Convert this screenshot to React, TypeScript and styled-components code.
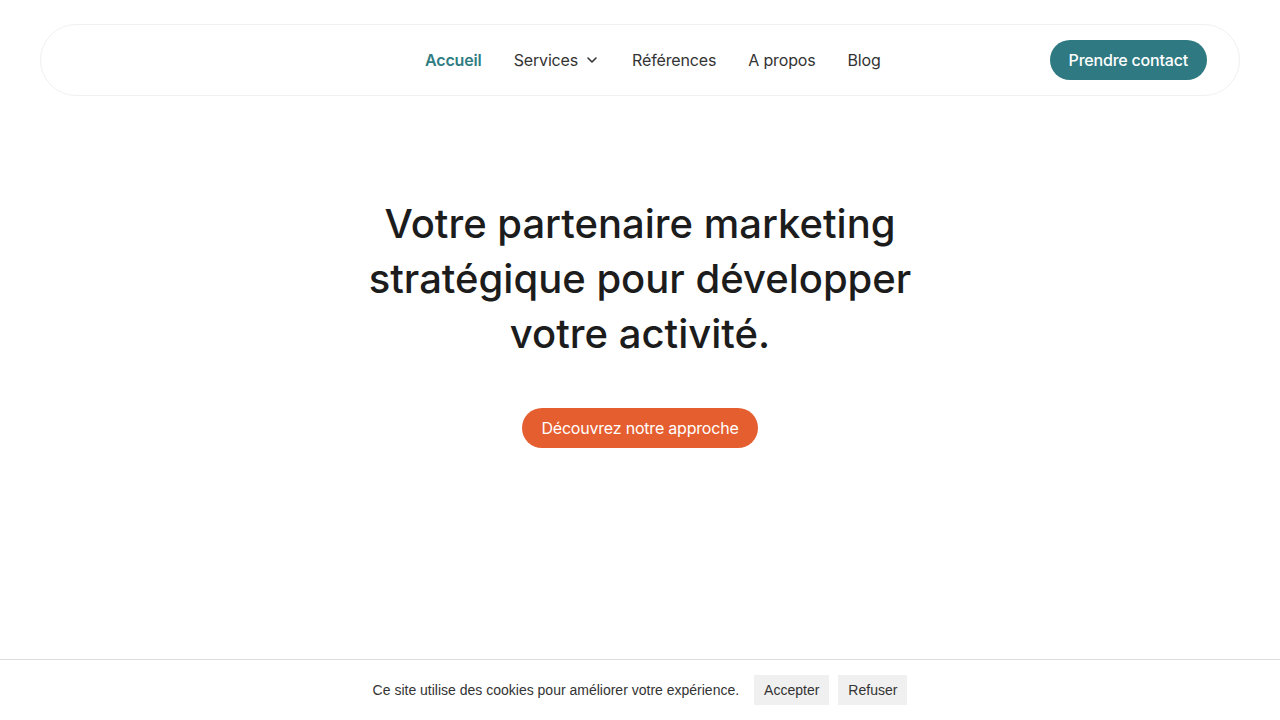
import React from 'react'
import styled, { createGlobalStyle } from 'styled-components'

const GlobalStyle = createGlobalStyle`
  html, body {
    margin: 0;
    padding: 0;
    background: #ffffff;
  }
  body {
    font-family: Inter, 'Noto Sans', sans-serif;
    color: #1c1c1c;
  }
`

const Page = styled.div`
  min-height: 720px;
  display: flex;
  flex-direction: column;
`

const HeaderWrap = styled.header`
  padding: 24px 40px 0;
`

const Navbar = styled.nav`
  height: 70px;
  border: 1px solid #f0f0f0;
  border-radius: 36px;
  display: flex;
  align-items: center;
  padding: 0 32px;
`

const LogoSlot = styled.div`
  width: 352px;
  height: 40px;
`

const NavLinks = styled.ul`
  display: flex;
  align-items: center;
  gap: 32px;
  list-style: none;
  margin: 0;
  padding: 0;
  flex: 1;
`

const NavLink = styled.a<{ $active?: boolean }>`
  display: flex;
  align-items: center;
  gap: 6px;
  font-size: 16px;
  letter-spacing: -0.15px;
  font-weight: ${(p) => (p.$active ? 600 : 400)};
  color: ${(p) => (p.$active ? '#2f7d83' : '#333333')};
  text-decoration: none;
  cursor: pointer;
`

const ContactButton = styled.button`
  height: 40px;
  padding: 0 19px;
  border: none;
  border-radius: 20px;
  background: #2f7a82;
  color: #ffffff;
  font-family: Inter, 'Noto Sans', sans-serif;
  font-size: 16px;
  font-weight: 500;
  letter-spacing: -0.2px;
  cursor: pointer;
`

const Hero = styled.section`
  display: flex;
  flex-direction: column;
  align-items: center;
  padding-top: 100px;
`

const Title = styled.h1`
  margin: 0;
  max-width: 600px;
  text-align: center;
  font-size: 40px;
  line-height: 55px;
  font-weight: 500;
  letter-spacing: 0;
  color: #1c1c1c;
`

const CtaButton = styled.button`
  margin-top: 47px;
  height: 40px;
  padding: 0 19px;
  border: none;
  border-radius: 20px;
  background: #e55e30;
  color: #ffffff;
  font-family: Inter, 'Noto Sans', sans-serif;
  font-size: 16px;
  font-weight: 400;
  letter-spacing: -0.2px;
  cursor: pointer;
`

const CookieBar = styled.div`
  position: fixed;
  left: 0;
  right: 0;
  bottom: 0;
  height: 60px;
  background: #ffffff;
  border-top: 1px solid #dddddd;
  display: flex;
  align-items: center;
  justify-content: center;
  gap: 9px;
  font-family: 'Liberation Sans', Arial, sans-serif;
  font-size: 14px;
  color: #333333;
`

const CookieText = styled.span`
  margin-right: 6px;
`

const CookieButton = styled.button`
  height: 30px;
  padding: 0 10px;
  border: none;
  background: #f0f0f0;
  color: #333333;
  font-family: 'Liberation Sans', Arial, sans-serif;
  font-size: 14px;
  cursor: pointer;
`

function Chevron() {
  return (
    <svg width="16" height="16" viewBox="0 0 24 24" fill="none" stroke="#333" strokeWidth="2.4" strokeLinecap="round" strokeLinejoin="round">
      <path d="M6 9l6 6 6-6" />
    </svg>
  )
}

export default function App() {
  return (
    <Page>
      <GlobalStyle />
      <HeaderWrap>
        <Navbar>
          <LogoSlot />
          <NavLinks>
            <li><NavLink $active>Accueil</NavLink></li>
            <li><NavLink>Services <Chevron /></NavLink></li>
            <li><NavLink>Références</NavLink></li>
            <li><NavLink>A propos</NavLink></li>
            <li><NavLink>Blog</NavLink></li>
          </NavLinks>
          <ContactButton>Prendre contact</ContactButton>
        </Navbar>
      </HeaderWrap>
      <Hero>
        <Title>Votre partenaire marketing stratégique pour développer votre activité.</Title>
        <CtaButton>Découvrez notre approche</CtaButton>
      </Hero>
      <CookieBar>
        <CookieText>Ce site utilise des cookies pour améliorer votre expérience.</CookieText>
        <CookieButton>Accepter</CookieButton>
        <CookieButton>Refuser</CookieButton>
      </CookieBar>
    </Page>
  )
}
